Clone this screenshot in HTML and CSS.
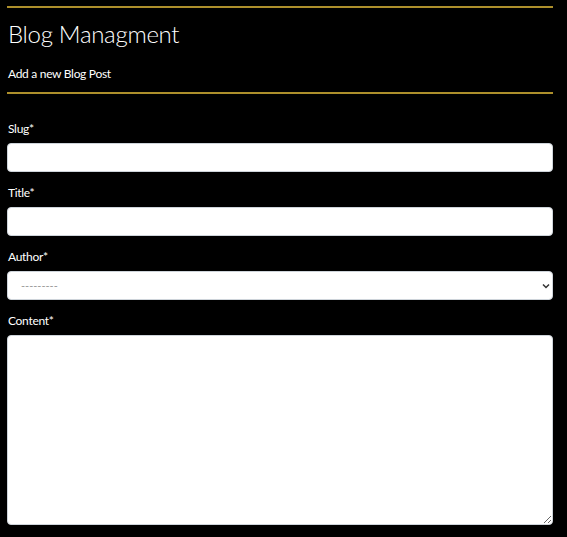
FILE: index.html
```html
<!DOCTYPE html>
<html>
<head>
<meta charset="utf-8">
<link rel="stylesheet" href="styles.css">
</head>
<body>
<div class="page">
  <hr class="rule">
  <h1 class="title">Blog Managment</h1>
  <p class="subtitle">Add a new Blog Post</p>
  <hr class="rule">
  <form class="form">
    <div class="field">
      <label class="label">Slug*</label>
      <input class="control" type="text">
    </div>
    <div class="field">
      <label class="label">Title*</label>
      <input class="control" type="text">
    </div>
    <div class="field">
      <label class="label">Author*</label>
      <div class="select-wrap">
        <select class="control select"><option>---------</option></select>
        <svg class="chev" width="8" height="6" viewBox="0 0 8 6"><path d="M1 1.5 L4 4.5 L7 1.5" fill="none" stroke="#333" stroke-width="1.5"/></svg>
      </div>
    </div>
    <div class="field">
      <label class="label">Content*</label>
      <textarea class="control area"></textarea>
    </div>
  </form>
</div>
</body>
</html>
```
FILE: styles.css
```css
html, body {
  margin: 0;
  padding: 0;
  background: #000;
}
body {
  font-family: Lato, "Open Sans", sans-serif;
  color: #fff;
}
.page {
  width: 546px;
  margin: 0 7px;
  padding-top: 6px;
}
.rule {
  border: 0;
  height: 2px;
  background: #ad8f2b;
  margin: 0;
}
.title {
  font-weight: 300;
  font-size: 24px;
  letter-spacing: -0.3px;
  line-height: 28px;
  margin: 12px 0 0 1px;
}
.subtitle {
  font-size: 12px;
  letter-spacing: -0.3px;
  line-height: 15px;
  margin: 18px 0 0 1px;
}
.subtitle + .rule {
  margin-top: 11px;
}
.form {
  padding-top: 28px;
}
.field {
  margin-bottom: 14px;
}
.field:last-child {
  margin-bottom: 0;
}
.label {
  display: block;
  font-size: 12px;
  letter-spacing: -0.3px;
  line-height: 14px;
  margin: 0 0 7px 1px;
}
.control {
  display: block;
  box-sizing: border-box;
  width: 546px;
  height: 29px;
  border: 1px solid #ced4da;
  border-radius: 4px;
  background: #fff;
  font-family: Lato, sans-serif;
  font-size: 12px;
  padding: 0 12px;
  margin: 0;
}
.select-wrap {
  position: relative;
}
.select {
  appearance: none;
  -webkit-appearance: none;
  color: #999;
  font-size: 11px;
  padding-left: 13px;
}
.chev {
  position: absolute;
  right: 3px;
  top: 12px;
}
.area {
  height: 190px;
  resize: vertical;
}
```
